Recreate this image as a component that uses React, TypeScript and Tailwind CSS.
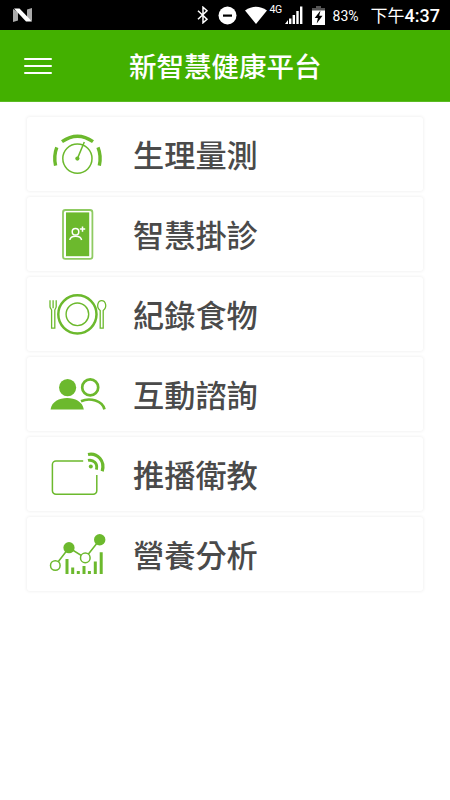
import type { ReactNode } from "react";

const GREEN = "#6cb92d";

const GaugeIcon = () => (
  <svg width="60" height="60" viewBox="0 0 60 60" fill="none" stroke={GREEN}>
    <path d="M14 17.7Q29.5 6.7 45 17.7" strokeWidth="3.4" />
    <path d="M8.8 23.3Q5.4 32 7.6 41.6M50 23.3Q53.5 32 51.3 41.6" strokeWidth="3.4" />
    <circle cx="29.4" cy="34.6" r="14.6" strokeWidth="1.5" />
    <path d="M29.4 34.6L36.3 18" strokeWidth="1.5" />
    <circle cx="29.4" cy="34.6" r="2.1" fill={GREEN} stroke="none" />
  </svg>
);

const PhoneIcon = () => (
  <svg width="60" height="60" viewBox="0 0 60 60" fill="none">
    <rect x="15" y="6" width="29.4" height="48.8" rx="2.4" stroke="#8fcb62" strokeWidth="1.8" />
    <rect x="18" y="8.4" width="23.2" height="43.8" fill={GREEN} />
    <g stroke="#fff" strokeWidth="1.5">
      <circle cx="27.5" cy="27.7" r="3.3" />
      <path d="M21.8 36C22.6 31 32.6 31 33.6 36M34.5 22.4v5.4M31.8 25.1h5.4" />
    </g>
  </svg>
);

const MealIcon = () => (
  <svg width="60" height="60" viewBox="0 0 60 60" fill="none" stroke={GREEN}>
    <circle cx="29.4" cy="30.3" r="19.1" strokeWidth="2.5" />
    <circle cx="29.4" cy="30.3" r="11.3" strokeWidth="1.4" />
    <path d="M2 16.3v6.2c0 2 1.6 2.5 1.6 3.6V44.2h3.2V26.1c0-1.1 1.4-1.6 1.4-3.6v-6.2M5.1 16.3v8" strokeWidth="1.3" />
    <path d="M52.2 44.2V26.5c-4.4-3-2.5-9.8 1.5-9.8s5.9 6.8 1.5 9.8v17.7z" strokeWidth="1.3" />
  </svg>
);

const PeopleIcon = () => (
  <svg width="60" height="60" viewBox="0 0 60 60" fill="none">
    <circle cx="19.6" cy="23.6" r="8.6" fill={GREEN} />
    <path d="M2.6 45.4C4.5 30.3 33.6 30.3 35.8 45.4z" fill={GREEN} />
    <circle cx="42.2" cy="23.4" r="8" stroke={GREEN} strokeWidth="2.7" />
    <path d="M33 37.2C42 33.2 54.5 36.8 56.5 45.4" stroke={GREEN} strokeWidth="2.7" />
  </svg>
);

const BroadcastIcon = () => (
  <svg width="60" height="60" viewBox="0 0 60 60" fill="none" stroke={GREEN}>
    <path d="M35.2 16.9H8a3.6 3.6 0 0 0-3.6 3.6v26.2A3.6 3.6 0 0 0 8 50.3h37.2a3.6 3.6 0 0 0 3.6-3.6V31" strokeWidth="1.5" />
    <circle cx="42.8" cy="22.4" r="2" fill={GREEN} stroke="none" />
    <path d="M40 16.4C45.5 15.2 50 19.5 48.4 25.6" strokeWidth="2.9" />
    <path d="M40 10.5C49.5 8.6 57.3 17 54.2 27.2" strokeWidth="3.2" />
  </svg>
);

const ChartIcon = () => (
  <svg width="60" height="60" viewBox="0 0 60 60" fill={GREEN}>
    <path d="M7.3 41.5L21 23.7L37.3 33.9L51.7 15.7" fill="none" stroke={GREEN} strokeWidth="1.6" />
    <circle cx="7.3" cy="41.5" r="4.8" fill="#fff" stroke={GREEN} strokeWidth="1.5" />
    <circle cx="21" cy="23.7" r="5.6" />
    <circle cx="37.3" cy="33.9" r="4.8" fill="#fff" stroke={GREEN} strokeWidth="1.5" />
    <circle cx="51.7" cy="15.7" r="5.7" />
    <path d="M17.5 35h3v15h-3zM23.2 43.5h3V50h-3zM28.8 47h3v3h-3zM34.5 42h3v8h-3zM39.9 47h3v3h-3zM45.8 37.6h3V50h-3zM51.7 28.3h3V50h-3z" />
  </svg>
);

const menu: { label: string; icon: ReactNode }[] = [
  { label: "生理量測", icon: <GaugeIcon /> },
  { label: "智慧掛診", icon: <PhoneIcon /> },
  { label: "紀錄食物", icon: <MealIcon /> },
  { label: "互動諮詢", icon: <PeopleIcon /> },
  { label: "推播衛教", icon: <BroadcastIcon /> },
  { label: "營養分析", icon: <ChartIcon /> },
];

const StatusBar = () => (
  <div className="flex h-[30px] items-center bg-black pl-[13px] pr-[10px] text-white">
    <svg width="19" height="14" viewBox="0 0 19 14">
      <path d="M0 1l5 3v8.5L0 14zM19 0v13l-5-2.5V1.5z" fill="#aaa" />
      <path d="M1 .5h5.5L19 13.5h-6z" fill="#fff" />
    </svg>
    <svg className="ml-auto" width="12" height="18" viewBox="0 0 12 18" fill="none" stroke="#fff" strokeWidth="1.5">
      <path d="M1 4.8L10 13.2L6 16.8V1.2L10 4.8L1 13.2" />
    </svg>
    <svg className="ml-[9px]" width="19" height="19" viewBox="0 0 19 19">
      <circle cx="9.5" cy="9.5" r="9" fill="#fff" />
      <path d="M5 8.5h9v2.2H5z" fill="#000" />
    </svg>
    <svg className="ml-[8px]" width="22" height="18" viewBox="0 0 22 18" fill="#fff">
      <path d="M0 4.5Q11 -3 22 4.5L11 18z" />
    </svg>
    <span className="ml-[3px] -mt-[9px] w-[13px] text-[10.5px] leading-none tracking-[-0.5px]">4G</span>
    <svg className="ml-[2px]" width="18" height="18" viewBox="0 0 18 18" fill="#fff">
      <path d="M0 18l3-4v4zM4 12.5h2.4V18H4zM7.6 9H10v9H7.6zM11.3 5h2.4v13h-2.4zM15 .5h2.4V18H15z" />
    </svg>
    <svg className="ml-[9px]" width="13" height="19" viewBox="0 0 13 19">
      <path d="M4 0h5v2h4v3H0V2h4z" fill="#555" />
      <path d="M0 4.5h13V19H0z" fill="#fff" />
      <path d="M8.5 4.5L2.7 12h3.2l-1.2 5.5L10.5 9.8H7.2z" fill="#000" />
    </svg>
    <span className="ml-[8px] w-[27px] whitespace-nowrap pt-px text-[14px] leading-none">83%</span>
    <span className="ml-[11px] whitespace-nowrap pt-[2px] text-[17px] leading-none">
      下午<span className="text-[18px] font-medium">4:37</span>
    </span>
  </div>
);

const App = () => {
  return (
    <div className="min-h-[800px] w-[450px] bg-white font-[Roboto,'Noto_Sans_CJK_TC',sans-serif]">
      <StatusBar />
      <header className="flex h-[72px] items-center border-b border-[#5abb23] bg-[#43b000] pl-6">
        <button className="flex w-7 flex-col gap-[5px]">
          <span className="h-[2px] w-full rounded-full bg-white" />
          <span className="h-[2px] w-full rounded-full bg-white" />
          <span className="h-[2px] w-full rounded-full bg-white" />
        </button>
        <h1 className="ml-[77px] pt-[4px] text-[27.5px] leading-none font-medium text-white">新智慧健康平台</h1>
      </header>
      <main className="flex flex-col gap-[6px] px-[27px] pt-[15px]">
        {menu.map((item) => (
          <div
            key={item.label}
            className="flex h-[74px] items-center rounded-[3px] bg-white pl-[21px] shadow-[0_0_3px_1px_rgba(0,0,0,0.05)]"
          >
            {item.icon}
            <span className="ml-[25px] pt-[6px] text-[31.2px] leading-none font-medium text-[#4a4a4a]">{item.label}</span>
          </div>
        ))}
      </main>
    </div>
  );
};

export default App;
